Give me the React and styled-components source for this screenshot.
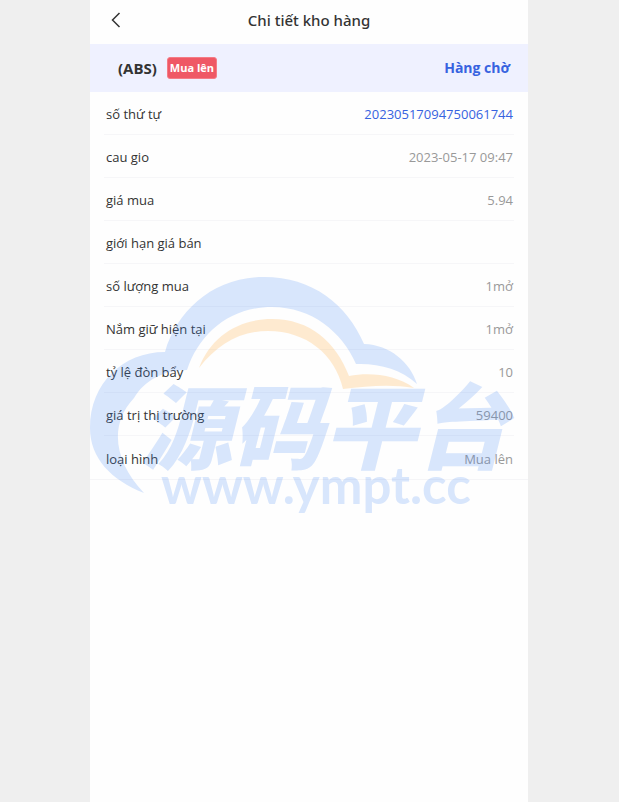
import React from "react";
import styled, { createGlobalStyle } from "styled-components";

const rows = [
    { label: "số thứ tự", value: "20230517094750061744", highlight: true },
    { label: "cau gio", value: "2023-05-17 09:47" },
    { label: "giá mua", value: "5.94" },
    { label: "giới hạn giá bán", value: "" },
    { label: "số lượng mua", value: "1mở" },
    { label: "Nắm giữ hiện tại", value: "1mở" },
    { label: "tỷ lệ đòn bẩy", value: "10" },
    { label: "giá trị thị trường", value: "59400" },
    { label: "loại hình", value: "Mua lên" },
];

export default function App() {
    return (
        <>
            <GlobalStyle />
            <Page>
                <Panel>
                    <NavBar>
                        <BackButton type="button" aria-label="Back">
                            <svg width="10" height="16" viewBox="0 0 10 16" fill="none">
                                <path d="M8.5 1L1.5 8l7 7" stroke="#333" strokeWidth="1.5" />
                            </svg>
                        </BackButton>
                        <Title>Chi tiết kho hàng</Title>
                    </NavBar>
                    <Summary>
                        <Symbol>(ABS)</Symbol>
                        <Tag>Mua lên</Tag>
                        <Status>Hàng chờ</Status>
                    </Summary>
                    <Details>
                        {rows.map((row) => (
                            <Row key={row.label}>
                                <dt>{row.label}</dt>
                                <Value $highlight={row.highlight}>{row.value}</Value>
                            </Row>
                        ))}
                    </Details>
                    <Watermark />
                </Panel>
            </Page>
        </>
    );
}

function Watermark() {
    return (
        <WatermarkLayer viewBox="0 0 438 244" aria-hidden="true">
            <path
                fill="#4488f5"
                d="M54 217C21 204 0 182 0 152C0 107 33 76 75 76C87 34 124 1 174 1C222 1 257 28 274 68C300 69 320 86 327 108C311 93 288 87 266 88C252 56 222 31 182 31C139 31 109 58 97 94C73 94 54 105 44 122C18 149 25 187 54 217Z"
            />
            <path
                fill="#ffa01f"
                d="M109 92C121 60 149 43 182 43C220 43 246 66 259 100C281 96 306 99 324 112C301 108 278 110 253 113C245 78 216 55 178 55C149 55 127 69 109 92Z"
            />
            <Brand x="50" y="186">源码平台</Brand>
            <Domain x="71" y="228">www.ympt.cc</Domain>
        </WatermarkLayer>
    );
}

const GlobalStyle = createGlobalStyle`
    * {
        box-sizing: border-box;
    }
    body {
        margin: 0;
        background: #efefef;
        color: #333;
        font-family: "Open Sans", "Noto Sans", sans-serif;
        font-size: 13px;
        line-height: 20px;
    }
`;

const Page = styled.div`
    min-height: 100vh;
    padding: 0 91px 0 90px;
    display: flex;
`;

const Panel = styled.main`
    position: relative;
    flex: 1;
    background: #fefefe;
`;

const NavBar = styled.header`
    display: grid;
    grid-template-columns: 52px 1fr 52px;
    align-items: center;
    height: 44px;
    padding-bottom: 4px;
`;

const BackButton = styled.button`
    display: flex;
    justify-content: center;
    padding: 8px 0;
    border: 0;
    background: none;
    cursor: pointer;
`;

const Title = styled.h1`
    margin: 0;
    font-family: "Noto Sans", sans-serif;
    font-size: 15px;
    font-weight: 500;
    text-align: center;
`;

const Summary = styled.section`
    display: flex;
    align-items: center;
    height: 48px;
    padding: 0 18px 0 28px;
    background: #eff1ff;
`;

const Symbol = styled.strong`
    font-size: 15px;
`;

const Tag = styled.span`
    margin-left: 10px;
    padding: 0 2px;
    border: 1px solid #f47c86;
    border-radius: 3px;
    background: #ef5865;
    color: #fff;
    font-size: 11px;
    font-weight: 700;
`;

const Status = styled.strong`
    margin-left: auto;
    color: #3763e0;
    font-size: 14px;
`;

const Details = styled.dl`
    margin: 0;
    padding: 0 14px;
    border-bottom: 1px solid #f5f5f7;
`;

const Row = styled.div`
    display: flex;
    align-items: center;
    justify-content: space-between;
    height: 43px;
    padding: 2px 1px 0 2px;
    border-bottom: 1px solid #f6f6f8;
    &:last-child {
        border-bottom: 0;
    }
`;

const Value = styled.dd`
    margin: 0;
    color: ${(props) => (props.$highlight ? "#3763e0" : "#999")};
`;

const WatermarkLayer = styled.svg`
    position: absolute;
    top: 276px;
    left: 0;
    width: 100%;
    opacity: 0.2;
    pointer-events: none;
`;

const Brand = styled.text`
    fill: #4488f5;
    font-family: "Noto Sans CJK SC", sans-serif;
    font-size: 92px;
    font-style: italic;
    font-weight: 900;
`;

const Domain = styled.text`
    fill: #4488f5;
    font-family: Lato, sans-serif;
    font-size: 51px;
    font-weight: 700;
`;
